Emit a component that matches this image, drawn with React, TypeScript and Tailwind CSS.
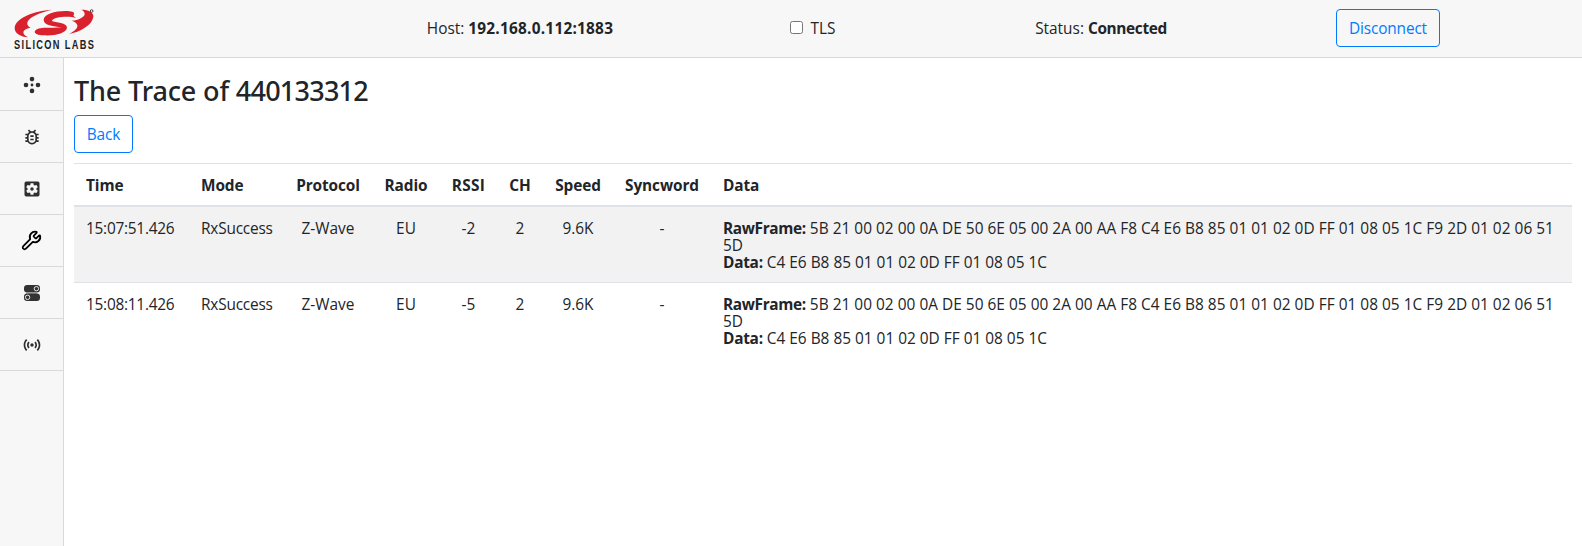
import type { ReactNode } from 'react';
import { MdOutlineBugReport, MdSensors, MdSettingsApplications } from 'react-icons/md';
import { Wrench } from 'lucide-react';

const frames = [
  { time: '15:07:51.426', rssi: '-2' },
  { time: '15:08:11.426', rssi: '-5' },
].map((f) => ({
  ...f,
  mode: 'RxSuccess',
  protocol: 'Z-Wave',
  radio: 'EU',
  ch: '2',
  speed: '9.6K',
  syncword: '-',
  raw: '5B 21 00 02 00 0A DE 50 6E 05 00 2A 00 AA F8 C4 E6 B8 85 01 01 02 0D FF 01 08 05 1C F9 2D 01 02 06 51 5D',
  data: 'C4 E6 B8 85 01 01 02 0D FF 01 08 05 1C',
}));

function Logo() {
  return (
    <svg viewBox="0 0 360 168" className="h-[56px] w-[120px]" role="img" aria-label="Silicon Labs">
      <g fill="#da1f2d">
        <path d="M156 29C100 33 46 54 44 84C44 101 62 110 84 112C74 107 68 101 71 94C74 88 82 85 92 83C80 78 78 66 90 56C104 44 130 35 156 29Z" />
        <path d="M229 54C205 47 160 51 156 62C158 68 201 65 201 83C199 99 165 108 132 106C114 105 104 101 104 95C106 88 116 84 132 83C150 83 170 84 186 82C160 79 131 76 131 59C132 43 165 33 196 33C213 33 226 36 222 42C219 47 221 50 229 54Z" />
        <path d="M244 29C266 29 282 37 280 51C276 76 240 96 207 102C224 94 234 84 232 76C230 69 224 65 215 62C236 61 254 51 254 42C254 36 250 32 244 29Z" />
      </g>
      <circle cx="275" cy="33" r="4" fill="none" stroke="#444" strokeWidth="3" />
      <text
        x="56"
        y="146"
        transform="scale(0.75 1)"
        textLength="320"
        lengthAdjust="spacing"
        className="fill-[#222222] font-['Liberation_Sans',sans-serif] text-[37px] font-bold"
      >
        SILICON LABS
      </text>
    </svg>
  );
}

function NodesIcon() {
  return (
    <svg viewBox="0 0 18 18" className="size-[18px]" fill="currentColor">
      <circle cx="9" cy="9" r="1.4" />
      <circle cx="9" cy="3.1" r="2.3" />
      <circle cx="9" cy="14.9" r="2.3" />
      <circle cx="3" cy="9" r="2.3" />
      <circle cx="15" cy="9" r="2.3" />
    </svg>
  );
}

function SwitchesIcon() {
  return (
    <svg viewBox="0 0 18 18" className="size-[18px]">
      <rect x="1" y="1" width="16" height="7.4" rx="3.2" fill="#333" />
      <rect x="3" y="8.2" width="11" height="1.6" fill="#999" />
      <rect x="1" y="9.6" width="16" height="7.4" rx="3.2" fill="#333" />
      <circle cx="13.4" cy="4.7" r="2.2" fill="none" stroke="#e8e8e8" strokeWidth="1" />
      <circle cx="4.6" cy="13.3" r="2.2" fill="none" stroke="#e8e8e8" strokeWidth="1" />
    </svg>
  );
}

function NavItem({ children }: { children: ReactNode }) {
  return (
    <a className="flex h-[52px] items-center justify-center border-b border-[#d9d9d9] text-[#2f2f2f]">{children}</a>
  );
}

function OutlineButton({ children, className }: { children: ReactNode; className: string }) {
  return (
    <button className={`h-[38px] rounded-[4px] border border-[#007bff] pt-px tracking-[-0.15px] text-[#007bff] ${className}`}>
      {children}
    </button>
  );
}

export default function App() {
  return (
    <div className="flex h-screen flex-col overflow-hidden bg-white font-['Open_Sans','Noto_Sans',sans-serif] text-[15.4px] leading-[17px] text-[#212529]">
      <header className="grid h-[58px] shrink-0 grid-cols-[374px_292px_292px_286px_288px] items-center border-b border-[#d9d9d9] bg-[#f7f7f7]">
        <div className="self-start">
          <Logo />
        </div>
        <div className="pb-px text-center">
          Host: <b className="tracking-[0.23px]">192.168.0.112:1883</b>
        </div>
        <label className="flex items-center justify-center gap-2 pl-px">
          <input type="checkbox" className="size-[13px] -translate-y-px" />
          TLS
        </label>
        <div className="pb-px text-center">
          Status: <b className="tracking-[-0.35px]">Connected</b>
        </div>
        <div className="flex justify-center pb-px">
          <OutlineButton className="w-[104px]">Disconnect</OutlineButton>
        </div>
      </header>
      <div className="flex grow">
        <nav className="w-[64px] shrink-0 border-r border-[#d9d9d9] bg-[#f7f7f7] pt-px">
          <NavItem><NodesIcon /></NavItem>
          <NavItem><MdOutlineBugReport className="size-5" /></NavItem>
          <NavItem><MdSettingsApplications className="size-5" /></NavItem>
          <NavItem><Wrench className="size-[21px] text-black" strokeWidth={2} /></NavItem>
          <NavItem><SwitchesIcon /></NavItem>
          <NavItem><MdSensors className="size-5" /></NavItem>
        </nav>
        <main className="w-[1508px] pt-4 pl-[10px]">
          <h3 className="mb-2 h-[33px] font-['Noto_Sans',sans-serif] text-[27px] leading-[34px] font-medium tracking-[-0.15px]">
            The Trace of <span className="tracking-[-0.75px]">440133312</span>
          </h3>
          <OutlineButton className="block w-[59px]">Back</OutlineButton>
          <table className="mt-[10px] w-[1498px] table-fixed border-separate border-spacing-0">
            <colgroup>
              <col className="w-[115px]" />
              <col className="w-[96px]" />
              <col className="w-[87px]" />
              <col className="w-[68px]" />
              <col className="w-[57px]" />
              <col className="w-[46px]" />
              <col className="w-[70px]" />
              <col className="w-[98px]" />
              <col />
            </colgroup>
            <thead>
              <tr className="text-center tracking-[-0.1px] *:border-t *:border-b-2 *:border-[#dee2e6] *:pt-[13px] *:pb-[11px]">
                <th className="pl-3 text-left">Time</th>
                <th className="pl-3 text-left">Mode</th>
                <th className="pr-px">Protocol</th>
                <th>Radio</th>
                <th className="tracking-[0.3px]">RSSI</th>
                <th>CH</th>
                <th>Speed</th>
                <th>Syncword</th>
                <th className="pl-3 text-left">Data</th>
              </tr>
            </thead>
            <tbody>
              {frames.map((f) => (
                <tr
                  key={f.time}
                  className="text-center align-top odd:bg-[#f2f2f2] even:*:border-t *:border-[#dee2e6] *:pt-[13px] *:pb-[11px]"
                >
                  <td className="pl-3 text-left tracking-[-0.25px]">{f.time}</td>
                  <td className="pl-3 text-left tracking-[-0.2px]">{f.mode}</td>
                  <td className="pr-px">{f.protocol}</td>
                  <td>{f.radio}</td>
                  <td>{f.rssi}</td>
                  <td>{f.ch}</td>
                  <td>{f.speed}</td>
                  <td>{f.syncword}</td>
                  <td className="px-3 text-left">
                    <b className="tracking-[-0.35px]">RawFrame:</b>{' '}
                    <span className="tracking-[0.03px]">{f.raw}</span>
                    <br />
                    <b className="tracking-[-0.25px]">Data:</b> {f.data}
                  </td>
                </tr>
              ))}
            </tbody>
          </table>
        </main>
      </div>
    </div>
  );
}
